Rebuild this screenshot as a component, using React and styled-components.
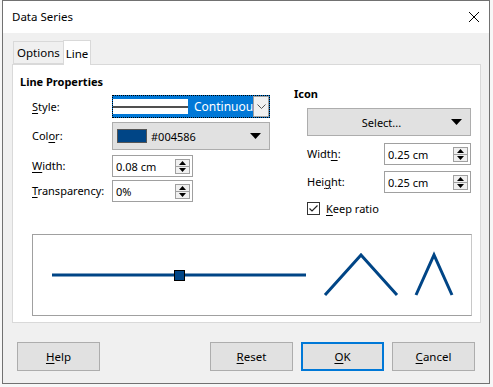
import React from 'react'
import styled, { createGlobalStyle } from 'styled-components'

const GlobalStyle = createGlobalStyle`
    html, body {
        margin: 0;
        padding: 0;
        background: #f7f7f7;
    }
    body {
        font-family: "Noto Sans", "Liberation Sans", sans-serif;
        font-size: 11px;
        color: #000;
    }
`

const Window = styled.div`
    margin-left: 2px;
    width: 486px;
    height: 382px;
    border: 1px solid #717171;
    background: #f0f0f0;
    display: flex;
    flex-direction: column;
`

const TitleBar = styled.div`
    height: 32px;
    background: #fff;
    display: flex;
    align-items: center;
    justify-content: space-between;
    padding: 0 9px 0 9px;
`

const Title = styled.span`
    font-size: 11.5px;
    line-height: 16px;
`

const Body = styled.div`
    flex: 1;
    display: flex;
    flex-direction: column;
    padding: 7px 8px 0 9px;
`

const TabRow = styled.div`
    display: flex;
    align-items: flex-end;
    height: 24px;
    padding-left: 1px;
`

const Tab = styled.div`
    height: ${p => (p.active ? 24 : 21)}px;
    padding: 0 ${p => (p.active ? 2 : 3)}px;
    margin-left: ${p => (p.active ? -1 : 0)}px;
    margin-bottom: ${p => (p.active ? -1 : 0)}px;
    background: ${p => (p.active ? '#fff' : '#f0f0f0')};
    border: 1px solid #d9d9d9;
    border-bottom: ${p => (p.active ? 'none' : '1px solid #d9d9d9')};
    display: flex;
    align-items: center;
    font-size: 11.5px;
    position: relative;
    z-index: ${p => (p.active ? 1 : 0)};
`

const Panel = styled.div`
    height: 259px;
    box-sizing: border-box;
    background: #fff;
    border: 1px solid #d9d9d9;
    padding: 9px 0 0 7px;
    display: flex;
    flex-direction: column;
`

const Columns = styled.div`
    display: flex;
    align-items: flex-start;
`

const LeftCol = styled.div`
    width: 250px;
    display: flex;
    flex-direction: column;
`

const RightCol = styled.div`
    margin-left: 24px;
    width: 177px;
    display: flex;
    flex-direction: column;
`

const Heading = styled.div`
    font-weight: bold;
    line-height: 16px;
    margin-top: ${p => p.top || 0}px;
`

const FieldRow = styled.div`
    display: flex;
    align-items: center;
    margin-top: ${p => p.top || 0}px;
    padding-left: ${p => p.indent || 0}px;
`

const Label = styled.span`
    width: ${p => p.width}px;
    flex-shrink: 0;
    line-height: 16px;
    white-space: nowrap;
`

const U = styled.span`
    text-decoration: underline;
    text-underline-offset: 2px;
`

const StyleBox = styled.div`
    width: 158px;
    height: 23px;
    box-sizing: border-box;
    background: #0078d7;
    outline: 1px dotted #000;
    outline-offset: -1px;
    display: flex;
    align-items: center;
    padding-left: 1px;
`

const LineSample = styled.div`
    width: 75px;
    height: 15px;
    flex-shrink: 0;
    background: #fff;
    display: flex;
    align-items: center;
    &::after {
        content: '';
        width: 100%;
        height: 2px;
        background: #505050;
    }
`

const StyleText = styled.span`
    color: #fff;
    margin-left: 6px;
    width: 59px;
    font-size: 12px;
    overflow: hidden;
    white-space: nowrap;
`

const DropButton = styled.div`
    width: 16px;
    height: 21px;
    box-sizing: border-box;
    background: #f0f0f0;
    border: 1px solid #a0a0a0;
    display: flex;
    align-items: center;
    justify-content: center;
`

const ListButton = styled.div`
    width: ${p => p.width}px;
    height: ${p => p.height}px;
    box-sizing: border-box;
    background: #e1e1e1;
    border: 1px solid #adadad;
    display: flex;
    align-items: center;
    padding: 0 8px 0 4px;
`

const Swatch = styled.div`
    width: 28px;
    height: 12px;
    background: #004586;
    border: 1px solid #555;
    margin-right: 4px;
`

const ButtonText = styled.span`
    flex: 1;
    text-align: ${p => p.align || 'left'};
`

const SpinBox = styled.div`
    width: ${p => p.width}px;
    height: 22px;
    box-sizing: border-box;
    background: #fff;
    border: 1px solid #a0a0a0;
    display: flex;
    align-items: center;
    padding: 0 2px 0 3px;
`

const SpinValue = styled.span`
    flex: 1;
`

const SpinButtons = styled.div`
    display: flex;
    flex-direction: column;
`

const SpinArrow = styled.div`
    width: 15px;
    height: 8px;
    box-sizing: border-box;
    border: 1px solid #a0a0a0;
    background: #f0f0f0;
    display: flex;
    align-items: center;
    justify-content: center;
    margin-top: ${p => (p.down ? -1 : 0)}px;
`

const CheckRow = styled.label`
    display: flex;
    align-items: center;
    gap: 6px;
    margin-top: ${p => p.top || 0}px;
    padding-left: 13px;
`

const CheckBox = styled.div`
    width: 13px;
    height: 13px;
    box-sizing: border-box;
    border: 1px solid #333;
    background: #fff;
    display: flex;
    align-items: center;
    justify-content: center;
`

const Preview = styled.div`
    margin: 18px 0 0 12px;
    width: 440px;
    height: 82px;
    box-sizing: border-box;
    border: 1px solid #a0a0a0;
    border-right-color: #c8c8c8;
`

const Footer = styled.div`
    display: flex;
    align-items: center;
    padding: 19px 0 0 5px;
`

const Button = styled.button`
    width: 83px;
    height: 29px;
    box-sizing: border-box;
    font: inherit;
    font-size: 11.5px;
    color: #000;
    background: #e1e1e1;
    border: ${p => (p.primary ? '2px solid #0078d7' : '1px solid #adadad')};
    margin-left: ${p => p.gap || 0}px;
    padding: 0;
`

const Tri = ({ up }) => (
    <svg width="7" height="4" viewBox="0 0 7 4">
        <path d={up ? 'M0 4 L3.5 0 L7 4 Z' : 'M0 0 L3.5 4 L7 0 Z'} fill="#000" />
    </svg>
)

const Spin = ({ value, width }) => (
    <SpinBox width={width}>
        <SpinValue>{value}</SpinValue>
        <SpinButtons>
            <SpinArrow>
                <Tri up />
            </SpinArrow>
            <SpinArrow down>
                <Tri />
            </SpinArrow>
        </SpinButtons>
    </SpinBox>
)

const DownTriangle = () => (
    <svg width="11" height="6" viewBox="0 0 11 6">
        <path d="M0 0 L11 0 L5.5 6 Z" fill="#000" />
    </svg>
)

const App = () => (
    <>
        <GlobalStyle />
        <Window>
            <TitleBar>
                <Title>Data Series</Title>
                <svg width="12" height="12" viewBox="0 0 12 12">
                    <path d="M1 1 L11 11 M11 1 L1 11" stroke="#000" strokeWidth="1" />
                </svg>
            </TitleBar>
            <Body>
                <TabRow>
                    <Tab>Options</Tab>
                    <Tab active>Line</Tab>
                </TabRow>
                <Panel>
                    <Columns>
                        <LeftCol>
                            <Heading>Line Properties</Heading>
                            <FieldRow top={5} indent={12}>
                                <Label width={80}><U>S</U>tyle:</Label>
                                <StyleBox>
                                    <LineSample />
                                    <StyleText>Continuous</StyleText>
                                    <DropButton>
                                        <svg width="9" height="5" viewBox="0 0 9 5">
                                            <path d="M0.5 0.5 L4.5 4.5 L8.5 0.5" stroke="#555" fill="none" />
                                        </svg>
                                    </DropButton>
                                </StyleBox>
                            </FieldRow>
                            <FieldRow top={4} indent={12}>
                                <Label width={80}>Col<U>o</U>r:</Label>
                                <ListButton width={158} height={28}>
                                    <Swatch />
                                    <ButtonText>#004586</ButtonText>
                                    <DownTriangle />
                                </ListButton>
                            </FieldRow>
                            <FieldRow top={5} indent={12}>
                                <Label width={80}><U>W</U>idth:</Label>
                                <Spin value="0.08 cm" width={81} />
                            </FieldRow>
                            <FieldRow top={3} indent={12}>
                                <Label width={80}><U>T</U>ransparency:</Label>
                                <Spin value="0%" width={81} />
                            </FieldRow>
                        </LeftCol>
                        <RightCol>
                            <Heading top={12}>Icon</Heading>
                            <FieldRow top={6} indent={13}>
                                <ListButton width={164} height={28}>
                                    <ButtonText align="center">Select...</ButtonText>
                                    <DownTriangle />
                                </ListButton>
                            </FieldRow>
                            <FieldRow top={7} indent={13}>
                                <Label width={77}>Widt<U>h</U>:</Label>
                                <Spin value="0.25 cm" width={87} />
                            </FieldRow>
                            <FieldRow top={6} indent={13}>
                                <Label width={77}>Hei<U>g</U>ht:</Label>
                                <Spin value="0.25 cm" width={87} />
                            </FieldRow>
                            <CheckRow top={8}>
                                <CheckBox>
                                    <svg width="11" height="11" viewBox="0 0 11 11">
                                        <path d="M1.5 5.5 L4 8 L9.5 2.5" stroke="#222" strokeWidth="1.2" fill="none" />
                                    </svg>
                                </CheckBox>
                                <span><U>K</U>eep ratio</span>
                            </CheckRow>
                        </RightCol>
                    </Columns>
                    <Preview>
                        <svg width="438" height="80" viewBox="0 0 438 80">
                            <path d="M19 40 L273 40" stroke="#004586" strokeWidth="3" />
                            <rect x="141.5" y="35.5" width="10" height="10" fill="#004586" stroke="#000" strokeWidth="1" />
                            <path d="M292 60 L328 20 L364 60" stroke="#004586" strokeWidth="3" fill="none" />
                            <path d="M383 60 L401 20 L419 60" stroke="#004586" strokeWidth="3" fill="none" />
                        </svg>
                    </Preview>
                </Panel>
                <Footer>
                    <Button><U>H</U>elp</Button>
                    <Button gap={110}><U>R</U>eset</Button>
                    <Button primary gap={8}><U>O</U>K</Button>
                    <Button gap={8}><U>C</U>ancel</Button>
                </Footer>
            </Body>
        </Window>
    </>
)

export default App
